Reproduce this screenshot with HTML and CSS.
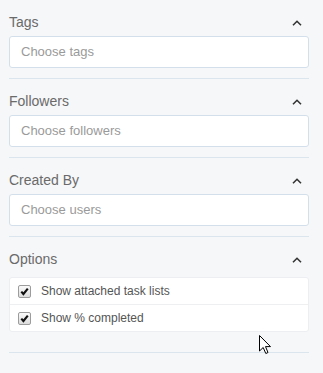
FILE: index.html
```html
<!DOCTYPE html>
<html>
<head>
<meta charset="utf-8">
<link rel="stylesheet" href="styles.css">
</head>
<body>
<div class="panel">
  <section class="sec">
    <div class="head"><span class="title">Tags</span><svg class="chev" width="10" height="6" viewBox="0 0 10 6"><path d="M1 5.2 L5 1.3 L9 5.2" fill="none" stroke="#333" stroke-width="1.6"/></svg></div>
    <div class="input">Choose tags</div>
  </section>
  <section class="sec">
    <div class="head"><span class="title">Followers</span><svg class="chev" width="10" height="6" viewBox="0 0 10 6"><path d="M1 5.2 L5 1.3 L9 5.2" fill="none" stroke="#333" stroke-width="1.6"/></svg></div>
    <div class="input">Choose followers</div>
  </section>
  <section class="sec">
    <div class="head"><span class="title">Created By</span><svg class="chev" width="10" height="6" viewBox="0 0 10 6"><path d="M1 5.2 L5 1.3 L9 5.2" fill="none" stroke="#333" stroke-width="1.6"/></svg></div>
    <div class="input">Choose users</div>
  </section>
  <section class="sec sec-opts">
    <div class="head"><span class="title">Options</span><svg class="chev" width="10" height="6" viewBox="0 0 10 6"><path d="M1 5.2 L5 1.3 L9 5.2" fill="none" stroke="#333" stroke-width="1.6"/></svg></div>
    <div class="opts">
      <div class="opt"><span class="cb"><svg width="11" height="11" viewBox="0 0 11 11"><path d="M2.3 5.6 L4.4 8 L8.8 2.6" fill="none" stroke="#111" stroke-width="2.1"/></svg></span><span>Show attached task lists</span></div>
      <div class="opt"><span class="cb"><svg width="11" height="11" viewBox="0 0 11 11"><path d="M2.3 5.6 L4.4 8 L8.8 2.6" fill="none" stroke="#111" stroke-width="2.1"/></svg></span><span>Show % completed</span></div>
    </div>
  </section>
</div>
<svg class="cursor" width="13" height="20" viewBox="0 0 13 20"><path d="M0.5 0.5 L0.5 16 L4.2 12.5 L6.8 18.5 L9 17.5 L6.5 11.6 L11.5 11.6 Z" fill="#fff" stroke="#000" stroke-width="1"/></svg>
</body>
</html>
```
FILE: styles.css
```css
html, body {
  margin: 0;
  padding: 0;
  background: #f6f7f9;
}
body {
  font-family: "Liberation Sans", Arial, sans-serif;
  width: 323px;
  height: 373px;
  overflow: hidden;
  position: relative;
}
.panel {
  padding-left: 9px;
  width: 300px;
}
.sec {
  padding-top: 12px;
  padding-bottom: 10px;
  border-bottom: 1px solid #dbe5ee;
}
.sec-opts {
  padding-bottom: 20px;
}
.head {
  height: 20px;
  line-height: 20px;
  display: flex;
  justify-content: space-between;
  align-items: center;
  margin-bottom: 4px;
}
.sec-opts .head {
  margin-bottom: 8px;
}
.title {
  font-size: 14px;
  color: #6a6a6a;
}
.chev {
  margin-right: 7px;
  margin-top: 2px;
}
.input {
  box-sizing: border-box;
  height: 32px;
  border: 1px solid #d3dfea;
  border-radius: 3px;
  background: #fff;
  font-size: 13px;
  color: #9a9a9a;
  padding-left: 11px;
  line-height: 30px;
}
.opts {
  background: #fff;
  border: 1px solid #eceef1;
  border-radius: 3px;
}
.opt {
  height: 26px;
  display: flex;
  align-items: center;
  padding-left: 8px;
  font-size: 12px;
  color: #555;
}
.opt + .opt {
  border-top: 1px solid #eeeff1;
}
.cb {
  box-sizing: border-box;
  width: 13px;
  height: 13px;
  border: 1px solid #9c9c9c;
  border-radius: 2px;
  background: linear-gradient(#fafafa, #dcdcdc);
  margin-right: 10px;
  display: flex;
  align-items: center;
  justify-content: center;
}
.cb svg {
  display: block;
}
.cursor {
  position: absolute;
  left: 259px;
  top: 335px;
}
```
